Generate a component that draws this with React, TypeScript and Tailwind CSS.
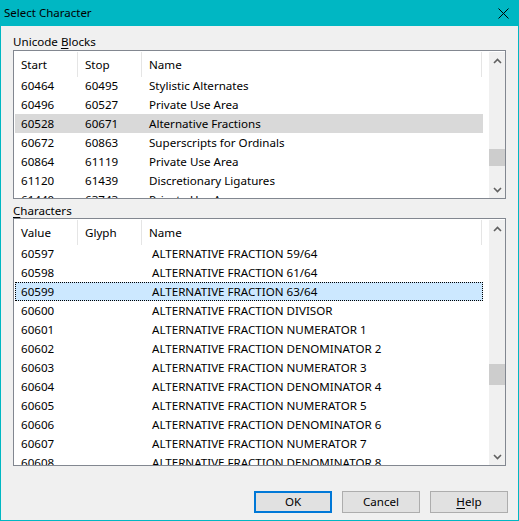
import React from "react";

const blocks = [
  ["60464", "60495", "Stylistic Alternates"],
  ["60496", "60527", "Private Use Area"],
  ["60528", "60671", "Alternative Fractions"],
  ["60672", "60863", "Superscripts for Ordinals"],
  ["60864", "61119", "Private Use Area"],
  ["61120", "61439", "Discretionary Ligatures"],
  ["61440", "63743", "Private Use Area"],
];

const chars = [
  ["60597", "ALTERNATIVE FRACTION 59/64"],
  ["60598", "ALTERNATIVE FRACTION 61/64"],
  ["60599", "ALTERNATIVE FRACTION 63/64"],
  ["60600", "ALTERNATIVE FRACTION DIVISOR"],
  ["60601", "ALTERNATIVE FRACTION NUMERATOR 1"],
  ["60602", "ALTERNATIVE FRACTION DENOMINATOR 2"],
  ["60603", "ALTERNATIVE FRACTION NUMERATOR 3"],
  ["60604", "ALTERNATIVE FRACTION DENOMINATOR 4"],
  ["60605", "ALTERNATIVE FRACTION NUMERATOR 5"],
  ["60606", "ALTERNATIVE FRACTION DENOMINATOR 6"],
  ["60607", "ALTERNATIVE FRACTION NUMERATOR 7"],
  ["60608", "ALTERNATIVE FRACTION DENOMINATOR 8"],
];

function Chevron({ up }: { up?: boolean }) {
  return (
    <svg width="9" height="6" viewBox="0 0 9 6">
      <polyline
        points={up ? "1,5 4.5,1.5 8,5" : "1,1 4.5,4.5 8,1"}
        fill="none"
        stroke="#606060"
        strokeWidth="1.6"
      />
    </svg>
  );
}

function ScrollBar({ thumbTop, thumbH }: { thumbTop: number; thumbH: number }) {
  return (
    <div className="w-[16px] bg-[#f0f0f0] flex flex-col mt-[1px]">
      <div className="h-[17px] flex items-center justify-center">
        <Chevron up />
      </div>
      <div className="flex-1 relative">
        <div
          className="absolute left-0 right-0 bg-[#cdcdcd]"
          style={{ top: thumbTop, height: thumbH }}
        />
      </div>
      <div className="h-[17px] flex items-center justify-center">
        <Chevron />
      </div>
    </div>
  );
}

function Header({ cols }: { cols: string[] }) {
  return (
    <div className="h-[25px] flex w-[469px] shrink-0">
      <div className="w-[64px] h-full flex items-center pl-[7px] border-r border-[#e5e5e5] mt-[1px]">{cols[0]}</div>
      <div className="w-[64px] h-full flex items-center pl-[7px] border-r border-[#e5e5e5] mt-[1px]">{cols[1]}</div>
      <div className="w-[340px] h-full flex items-center pl-[7px] border-r border-[#e5e5e5] mt-[1px]">{cols[2]}</div>
    </div>
  );
}

export default function App() {
  return (
    <div
      className="w-[519px] h-[521px] bg-[#00b7c3] flex flex-col text-[11.6px] text-black overflow-hidden"
      style={{ fontFamily: '"Noto Sans", "Liberation Sans", sans-serif' }}
    >
      <div className="h-[26px] flex items-center justify-between pl-[4px] pr-[10px] shrink-0">
        <span className="text-[11.5px]">Select Character</span>
        <svg width="11" height="11" viewBox="0 0 11 11">
          <path d="M0.5 0.5 L10.5 10.5 M10.5 0.5 L0.5 10.5" stroke="#000" strokeWidth="1" />
        </svg>
      </div>
      <div className="flex-1 mx-[1px] mb-[1px] bg-[#f0f0f0] px-[12px] flex flex-col">
        <div className="h-[15px] leading-[15px] mt-[8px] mb-[1px]">
          Unicode <span className="underline underline-offset-2">B</span>locks
        </div>
        <div className="h-[149px] border border-[#828790] bg-white flex overflow-hidden">
          <div className="flex-1 flex flex-col overflow-hidden">
            <Header cols={["Start", "Stop", "Name"]} />
            {blocks.map((b, i) => (
              <div
                key={i}
                className={`h-[19px] shrink-0 flex items-center ml-[1px] w-[468px] ${i === 2 ? "bg-[#d9d9d9]" : ""}`}
              >
                <div className="w-[63px] pl-[6px]">{b[0]}</div>
                <div className="w-[64px] pl-[7px]">{b[1]}</div>
                <div className="pl-[7px] whitespace-nowrap">{b[2]}</div>
              </div>
            ))}
          </div>
          <ScrollBar thumbTop={80} thumbH={17} />
        </div>
        <div className="h-[15px] leading-[15px] mt-[4px]">
          <span className="underline underline-offset-2">C</span>haracters
        </div>
        <div className="h-[248px] border border-[#828790] bg-white flex overflow-hidden">
          <div className="flex-1 flex flex-col overflow-hidden">
            <Header cols={["Value", "Glyph", "Name"]} />
            {chars.map((c, i) => (
              <div
                key={i}
                className={`h-[19px] shrink-0 flex items-center ml-[1px] w-[468px] ${
                  i === 2 ? "bg-[#cce8ff] border border-dotted border-black" : ""
                }`}
              >
                <div className={i === 2 ? "w-[62px] pl-[5px]" : "w-[63px] pl-[6px]"}>{c[0]}</div>
                <div className="w-[64px]"></div>
                <div className="pl-[10px] whitespace-nowrap">{c[1]}</div>
              </div>
            ))}
          </div>
          <ScrollBar thumbTop={127} thumbH={21} />
        </div>
        <div className="flex-1 flex items-end justify-end pb-[7px] gap-[10px] mr-[-2px]">
          <button className="w-[78px] h-[22px] bg-[#e1e1e1] border-2 border-[#0078d7] flex items-center justify-center">
            OK
          </button>
          <button className="w-[78px] h-[22px] bg-[#e1e1e1] border border-[#adadad] flex items-center justify-center">
            Cancel
          </button>
          <button className="w-[78px] h-[22px] bg-[#e1e1e1] border border-[#adadad] flex items-center justify-center">
            <span>
              <span className="underline underline-offset-2">H</span>elp
            </span>
          </button>
        </div>
      </div>
    </div>
  );
}
